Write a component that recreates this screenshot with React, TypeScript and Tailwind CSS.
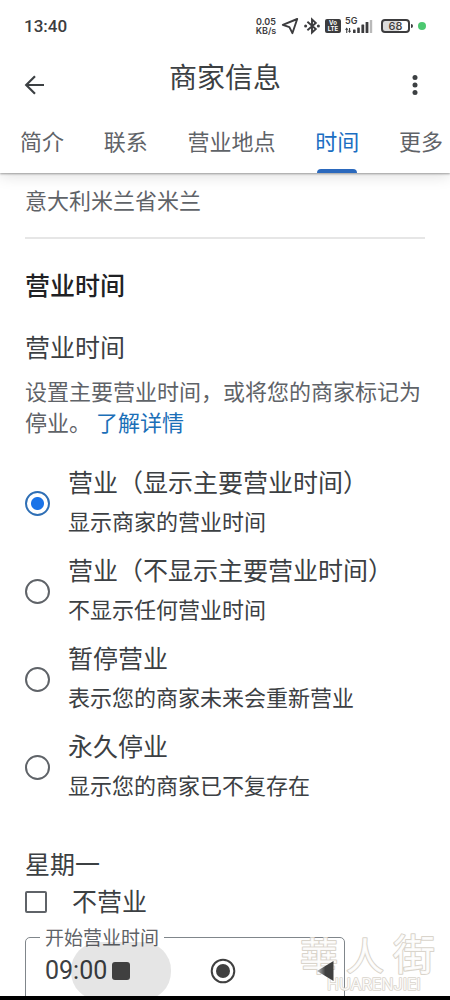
import { useState } from "react";

const sans = "font-['Noto_Sans_CJK_SC',sans-serif]";

const tabs = ["简介", "联系", "营业地点", "时间", "更多"];

const options = [
  { id: "open-hours", title: "营业（显示主要营业时间）", note: "显示商家的营业时间" },
  { id: "open-no-hours", title: "营业（不显示主要营业时间）", note: "不显示任何营业时间" },
  { id: "paused", title: "暂停营业", note: "表示您的商家未来会重新营业" },
  { id: "closed", title: "永久停业", note: "显示您的商家已不复存在" },
];

function StatusBar() {
  return (
    <div className="flex h-[52px] items-center justify-between px-6 font-['Roboto',sans-serif] text-[#3c3c3e]">
      <span className="text-[17px] font-medium leading-5">13:40</span>
      <div className="flex items-center gap-1">
        <span className="w-[22px] text-center font-['Inter',sans-serif] text-[9px] font-semibold leading-[9px]">
          0.05
          <br />
          KB/s
        </span>
        <svg width="18" height="18" viewBox="0 0 18 18" fill="none" stroke="currentColor" strokeWidth="1.9" strokeLinejoin="round" aria-hidden="true">
          <path d="M16.2 2 1.8 7.8l6.6 2.4 3 6z" />
        </svg>
        <svg width="18" height="18" viewBox="0 0 18 18" fill="none" stroke="currentColor" strokeWidth="1.9" aria-hidden="true">
          <path d="M4.4 4.8 12.8 12 9 15.6V2.4L12.8 6 4.4 13.2" />
          <circle cx="2.6" cy="9" r="1.5" fill="currentColor" stroke="none" />
          <circle cx="15.4" cy="9" r="1.5" fill="currentColor" stroke="none" />
        </svg>
        <span className="flex h-[14px] w-[16px] flex-col items-center justify-center rounded-[2px] bg-[#3c3c3e] font-['Inter',sans-serif] text-[6px] font-bold leading-[6px] text-white">
          <span>Vo</span>
          <span>LTE</span>
        </span>
        <span className="relative h-[18px] w-[28px]">
          <span className="absolute left-0 top-0 font-['Inter',sans-serif] text-[9px] font-semibold leading-2">5G</span>
          <svg className="absolute inset-0" width="28" height="18" viewBox="0 0 28 18" fill="currentColor" aria-hidden="true">
            <path d="M1.2 12h1.1v4H1.2zM4 11h1.1v4H4zM0 12.8l1.7-2.2 1.7 2.2zM2.9 13.8h3.3l-1.65 2.2z" />
            <rect x="8" y="12.5" width="2.6" height="3.5" rx=".6" />
            <rect x="12.2" y="10.5" width="2.6" height="5.5" rx=".6" />
            <rect x="16.4" y="7.5" width="2.8" height="8.5" rx=".6" />
            <rect x="20.6" y="5" width="2.8" height="11" rx=".6" />
            <rect x="24.8" y="3" width="2.4" height="13" rx=".6" fill="#b9b9b9" />
          </svg>
        </span>
        <span className="relative ml-1 flex h-[14px] w-[29px] items-center justify-center rounded-[4px] border-2 border-[#3c3c3e] bg-[linear-gradient(90deg,#dcdcdc_66%,#fff_66%)] font-['Inter',sans-serif] text-[11px] font-medium leading-[10px]">
          68
          <span className="absolute -right-[5px] top-[3px] h-1 w-[2px] rounded-r bg-[#3c3c3e]" />
        </span>
        <span className="ml-1 size-2 rounded-full bg-[#4cc870]" />
      </div>
    </div>
  );
}

function Header() {
  return (
    <header className="relative z-10 bg-white shadow-[0_1px_2px_rgba(0,0,0,0.35),0_3px_14px_rgba(0,0,0,0.13)]">
      <StatusBar />
      <div className="flex h-[60px] items-center justify-between px-6 text-[#3c4043]">
        <button type="button" aria-label="返回" className="mt-[6px]">
          <svg width="20" height="20" viewBox="0 0 20 20" fill="none" stroke="currentColor" strokeWidth="2.2" aria-hidden="true">
            <path d="M20 10H2.5M11 1.2 2.2 10l8.8 8.8" />
          </svg>
        </button>
        <h1 className="pb-3 text-[28px] leading-9">商家信息</h1>
        <button type="button" aria-label="更多选项" className="mt-[6px]">
          <svg width="20" height="20" viewBox="0 0 20 20" fill="currentColor" aria-hidden="true">
            <circle cx="9" cy="2.5" r="2.5" />
            <circle cx="9" cy="10" r="2.5" />
            <circle cx="9" cy="17.5" r="2.5" />
          </svg>
        </button>
      </div>
      <nav className="flex h-[61px] justify-between pl-5 pr-[7px] text-[22px] leading-[56px] text-[#5f6368]">
        {tabs.map((tab) => (
          <a
            key={tab}
            href="#hours"
            className={tab === "时间" ? "relative whitespace-nowrap text-[#1b6ec2]" : "whitespace-nowrap"}
          >
            {tab}
            {tab === "时间" && <span className="absolute inset-x-[2px] bottom-0 h-1 rounded-t bg-[#2b69bd]" />}
          </a>
        ))}
      </nav>
    </header>
  );
}

function SystemNav() {
  return (
    <div className="absolute inset-x-0 bottom-1 flex h-[54px] justify-center gap-[2px] overflow-hidden pr-1 text-[#404040]">
      <button type="button" aria-label="最近任务" className="flex h-[58px] w-[100px] items-center justify-center rounded-[28px] bg-black/10">
        <span className="size-[18px] rounded-[3px] bg-[#404040]" />
      </button>
      <button type="button" aria-label="主屏幕" className="flex h-[58px] w-[100px] items-center justify-center">
        <svg width="26" height="26" viewBox="0 0 26 26" aria-hidden="true">
          <circle cx="13" cy="13" r="11.3" fill="#fff" stroke="currentColor" strokeWidth="2" />
          <circle cx="13" cy="13" r="7" fill="currentColor" />
        </svg>
      </button>
      <button type="button" aria-label="后退" className="flex h-[58px] w-[100px] items-center justify-center">
        <svg width="17" height="20" viewBox="0 0 17 20" aria-hidden="true">
          <linearGradient id="back-fade">
            <stop offset="0.1" stopColor="#a8a8a8" />
            <stop offset="0.5" stopColor="#404040" />
          </linearGradient>
          <path d="M16.5 0v20L0 10z" fill="url(#back-fade)" />
        </svg>
      </button>
    </div>
  );
}

function Watermark() {
  return (
    <svg className="pointer-events-none absolute bottom-1 right-1" width="150" height="80" viewBox="0 0 150 80" aria-hidden="true">
      <g fill="#fff" fillOpacity=".9" stroke="#d9d4cb" strokeLinejoin="round" paintOrder="stroke">
        <g strokeWidth="2" fontFamily="'Noto Sans CJK TC', sans-serif" fontWeight="400">
          <text x="4" y="54" fontSize="38">華</text>
          <text x="50" y="54" fontSize="38">人</text>
          <text x="97" y="54" fontSize="42">街</text>
        </g>
        <text x="31" y="74" fontSize="16" fontWeight="400" strokeWidth="1.6" fontFamily="Inter, sans-serif">
          HUARENJIEI
        </text>
      </g>
    </svg>
  );
}

export default function App() {
  const [selected, setSelected] = useState("open-hours");
  const [closedMonday, setClosedMonday] = useState(false);
  const [opening, setOpening] = useState("09:00");

  return (
    <div className={`relative flex h-screen flex-col overflow-hidden bg-white text-[#3c4043] ${sans}`}>
      <Header />
      <main id="hours" className="min-h-0 flex-1 overflow-hidden px-[25px]">
        <p className="border-b-2 border-[#e6e6e6] pb-[22px] pt-[10px] text-[22px] leading-8 text-[#5f6368]">意大利米兰省米兰</p>
        <h2 className="mt-[25px] text-[25px] font-medium leading-10 text-[#202124]">营业时间</h2>
        <h3 className="mt-[22px] text-[25px] leading-10">营业时间</h3>
        <p className="mt-[9px] text-[22px] leading-[31px] text-[#5f6368]">
          设置主要营业时间，或将您的商家标记为停业。{" "}
          <a href="#learn-more" className="text-[#1b6fb8]">
            了解详情
          </a>
        </p>
        <div role="radiogroup" aria-label="营业时间" className="mt-[22px]">
          {options.map((option) => (
            <label key={option.id} htmlFor={option.id} className="flex h-[88px] items-center gap-[18px]">
              <input
                id={option.id}
                type="radio"
                name="status"
                checked={selected === option.id}
                onChange={() => setSelected(option.id)}
                className="size-[25px] shrink-0 appearance-none rounded-full border-2 border-[#5f6368] bg-white checked:border-[#2f6fb5] checked:bg-[radial-gradient(circle,#1a73e8_6px,#fff_7px)]"
              />
              <span className="flex flex-col whitespace-nowrap pb-[6px]">
                <span className="text-[25px] leading-10">{option.title}</span>
                <span className="text-[22px] leading-[38px]">{option.note}</span>
              </span>
            </label>
          ))}
        </div>
        <h3 className="mt-[34px] text-[25px] leading-9">星期一</h3>
        <label htmlFor="closed-monday" className="mt-[3px] flex h-9 items-center gap-[25px] text-[25px] leading-8">
          <input
            id="closed-monday"
            type="checkbox"
            checked={closedMonday}
            onChange={(event) => setClosedMonday(event.target.checked)}
            className="size-[22px] appearance-none rounded-[2px] border-2 border-[#5f6368] checked:bg-[#1a73e8]"
          />
          <span className="pb-1">不营业</span>
        </label>
        <fieldset className="mt-[3px] h-[90px] w-4/5 rounded-[5px] border border-[#80868b] pl-[14px]">
          <legend className="px-[5px] text-[19px] leading-7 text-[#5f6368]">
            <label htmlFor="opening">开始营业时间</label>
          </legend>
          <input
            id="opening"
            type="text"
            value={opening}
            onChange={(event) => setOpening(event.target.value)}
            className="w-full bg-transparent pl-[5px] font-['Roboto',sans-serif] text-[25px] leading-10 text-[#3c4043] outline-none"
          />
        </fieldset>
      </main>
      <Watermark />
      <SystemNav />
      <div className="relative h-1 shrink-0 bg-black" />
    </div>
  );
}
